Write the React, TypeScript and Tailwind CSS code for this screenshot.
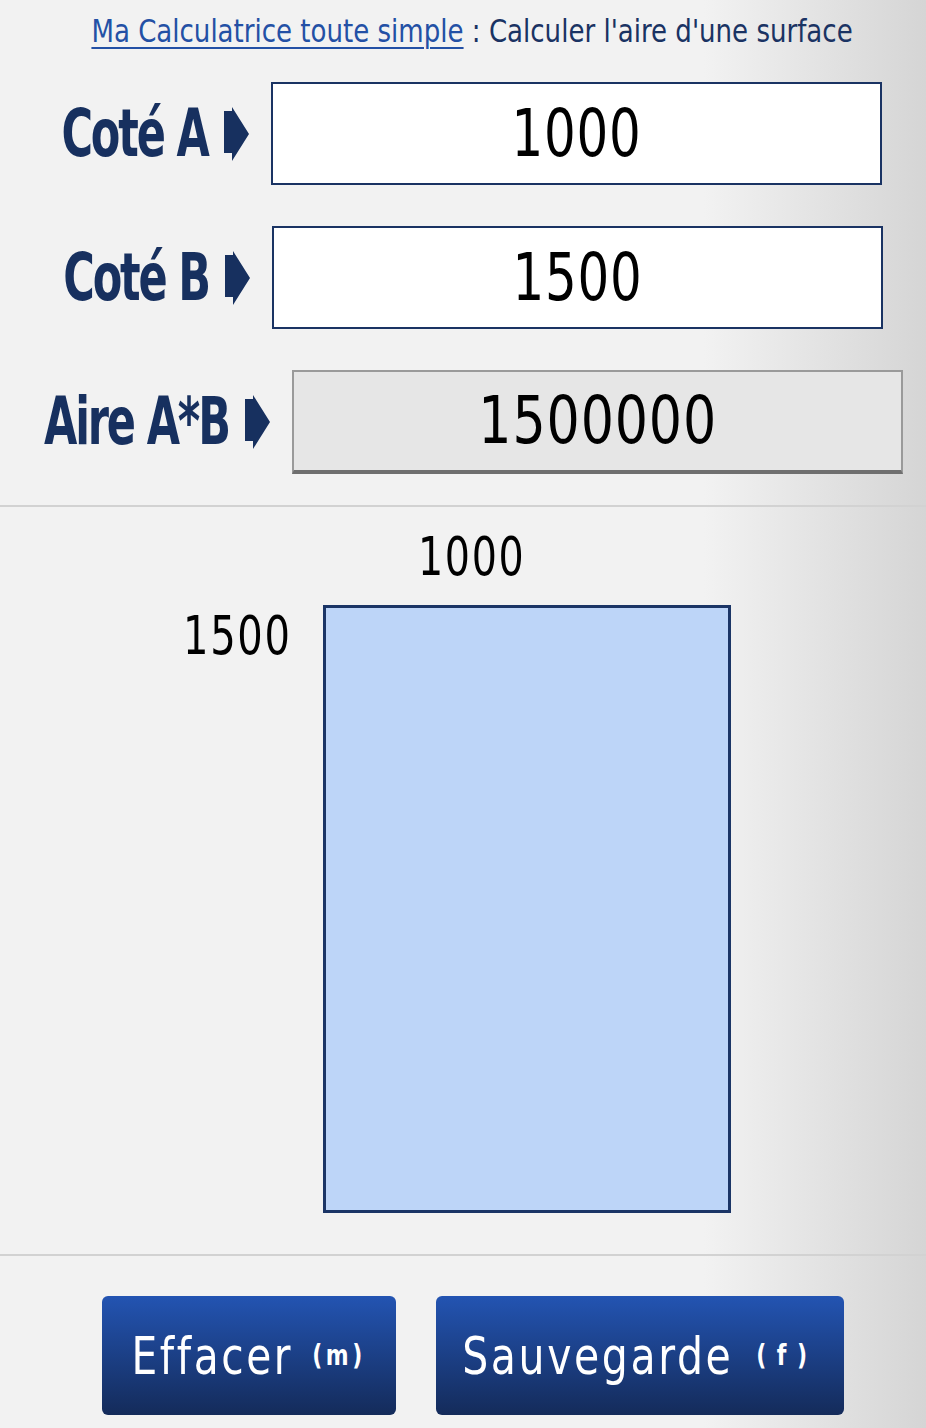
import React from "react";

const font = "font-['Liberation_Sans_Narrow','DejaVu_Sans_Condensed','Roboto_Condensed',sans-serif]";

function Arrow() {
  return (
    <svg width="25" height="54" viewBox="0 0 25 54" className="shrink-0">
      <polygon points="0,4 8,4 8,0 25,27 8,54 8,46 0,46" fill="#17305f" />
    </svg>
  );
}

function Row({
  label,
  value,
  labelW,
  result,
}: {
  label: string;
  value: string;
  labelW: string;
  result?: boolean;
}) {
  return (
    <div className="flex items-center">
      <div className={`flex items-center justify-end gap-[16px] ${labelW}`}>
        <span className="inline-block origin-right scale-x-[0.725] whitespace-nowrap text-[66px] font-bold leading-none tracking-[-3px] text-[#17305f]">
          {label}
        </span>
        <Arrow />
      </div>
      {result ? (
        <div className="ml-[22px] flex h-[104px] w-[611px] items-center justify-center border-x-2 border-t-2 border-b-[4px] border-x-[#9a9a9a] border-t-[#9a9a9a] border-b-[#6f6f6f] bg-[#e6e6e6]">
          <span className="inline-block scale-x-[0.88] text-[66px] leading-none tracking-[1px] text-black">{value}</span>
        </div>
      ) : (
        <div className="ml-[22px] flex h-[103px] w-[611px] items-center justify-center border-2 border-[#1a3363] bg-white">
          <span className="inline-block scale-x-[0.84] text-[66px] leading-none tracking-[1px] text-black">{value}</span>
        </div>
      )}
    </div>
  );
}

export default function App() {
  return (
    <div
      className={`${font} h-[1428px] w-[926px] overflow-hidden bg-[linear-gradient(to_right,#f2f2f2_76%,#d5d5d5_100%)]`}
    >
      <div className="scale-x-[0.905] whitespace-nowrap pl-[20px] pt-[15px] text-center text-[32px] leading-none">
        <span className="text-[#2350a5] underline decoration-[2px] underline-offset-[5px]">
          Ma Calculatrice toute simple
        </span>
        <span className="text-[#1a3363]"> : Calculer l'aire d'une surface</span>
      </div>

      <div className="mt-[35px] flex flex-col gap-[41px]">
        <Row label="Coté A" value="1000" labelW="w-[249px]" />
        <Row label="Coté B" value="1500" labelW="w-[250px]" />
        <Row label="Aire A*B" value="1500000" labelW="w-[270px]" result />
      </div>

      <div className="mt-[31px] h-[2px] bg-[#d2d2d2]" />

      <div className="mt-[23px]">
        <div className="ml-[418px] origin-left scale-x-[0.83] text-[53px] leading-none tracking-[2px] text-black">1000</div>
        <div className="mt-[22px] flex">
          <div className="ml-[183px] mt-[4px] w-[140px] shrink-0 origin-left scale-x-[0.84] text-[53px] leading-none tracking-[2px] text-black">
            1500
          </div>
          <div className="h-[608px] w-[408px] border-[3px] border-[#1b3566] bg-[#bdd5f8]" />
        </div>
      </div>

      <div className="mt-[41px] h-[2px] bg-[#d2d2d2]" />

      <div className="mt-[40px] flex gap-[40px] pl-[102px]">
        <button className="flex h-[119px] w-[294px] items-center justify-center rounded-[6px] bg-[linear-gradient(to_bottom,#2354b2,#142b5a)] text-white">
          <span className="inline-flex scale-x-[0.87] items-center gap-[22px] whitespace-nowrap">
            <span className="text-[52px] leading-none tracking-[3px]">Effacer</span>
            <span className="text-[28px] font-bold leading-none tracking-[4px]">(m)</span>
          </span>
        </button>
        <button className="flex h-[119px] w-[408px] items-center justify-center rounded-[6px] bg-[linear-gradient(to_bottom,#2354b2,#142b5a)] text-white">
          <span className="inline-flex scale-x-[0.876] items-center gap-[26px] whitespace-nowrap">
            <span className="text-[52px] leading-none tracking-[3px]">Sauvegarde</span>
            <span className="text-[28px] font-bold leading-none tracking-[12px]">(f)</span>
          </span>
        </button>
      </div>
    </div>
  );
}
